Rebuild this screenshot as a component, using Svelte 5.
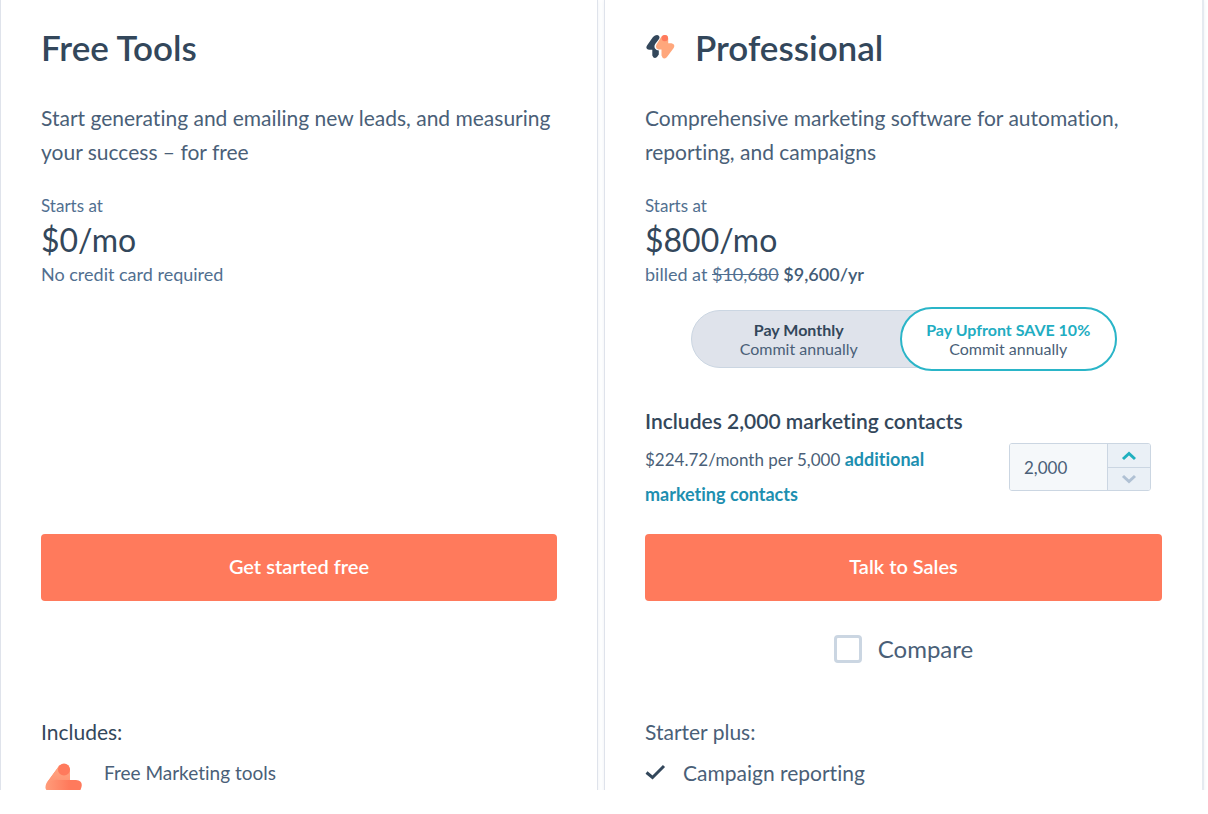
<script>
  let contacts = $state(2000);
  let billing = $state('upfront');
  let compare = $state(false);
  const shown = $derived(contacts.toLocaleString('en-US'));
</script>

<main>
  <section class="card">
    <h2>Free Tools</h2>
    <p class="summary">Start generating and emailing new leads, and measuring your success – for free</p>
    <div class="price">
      <p class="label">Starts at</p>
      <p class="amount">$0/mo</p>
      <p class="note">No credit card required</p>
    </div>
    <div class="options"></div>
    <button class="cta" type="button">Get started free</button>
    <div class="compare"></div>
    <div class="features">
      <h3>Includes:</h3>
      <ul>
        <li class="tool">
          <svg width="38" height="50" viewBox="0 0 38 50" aria-hidden="true">
            <defs>
              <linearGradient id="bolt" x1="0" y1="0" x2="1" y2="0">
                <stop offset="0" stop-color="#ff9c7a" />
                <stop offset="0.65" stop-color="#ff7a5c" />
              </linearGradient>
              <linearGradient id="fold" x1="0" y1="0" x2="0" y2="1">
                <stop offset="0" stop-color="#ffa883" />
                <stop offset="1" stop-color="#ff9474" />
              </linearGradient>
            </defs>
            <path d="M14 3 L1.500 20 Q-2 28 6 29 H13 V41 Q15 50 22 44 L35 28 Q40 18 31 17 H25 V7 Q23 -1 14 3Z" fill="url(#bolt)" />
            <path d="M14 3 L2 19.500 Q9 16 14 17 H25 V7 Q23 -1 14 3Z" fill="url(#fold)" />
            <circle cx="19" cy="6.500" r="6" fill="#ff7a5c" />
          </svg>
          <span>Free Marketing tools</span>
        </li>
      </ul>
    </div>
  </section>

  <section class="card">
    <h2>
      <svg width="30" height="26" viewBox="0 0 30 26" aria-hidden="true">
        <path d="M10 1.600 Q12.500 .3 14 2 Q15 3.400 14 5 L10.200 10 Q8.800 12.500 10 14.500 Q11.300 16.300 13.800 16.600 V20.500 L12 23 Q9 25.600 7.300 21.500 V15.800 H4 Q-.2 14.800 2.200 11.200 L8 3Z" fill="#33475b" />
        <path d="M16.500 2.500 L11.500 10.500 Q9.800 14.500 13.500 15.500 H16.500 V21.500 Q18 26.300 21.800 23.200 L28.700 14 Q30.700 10 26.500 9.200 H23.200 V4 Q22 -1 16.500 2.500Z" fill="#ffa77c" />
        <circle cx="19.800" cy="4.100" r="3.200" fill="#ff7a5c" />
      </svg>
      Professional
    </h2>
    <p class="summary">Comprehensive marketing software for automation, reporting, and campaigns</p>
    <div class="price">
      <p class="label">Starts at</p>
      <p class="amount">$800/mo</p>
      <p class="note">billed at <s>$10,680</s> <b>$9,600/yr</b></p>
    </div>
    <div class="options">
      <div class="toggle">
        <button type="button" class:active={billing === 'monthly'} onclick={() => (billing = 'monthly')}>
          <strong>Pay Monthly</strong>
          <span>Commit annually</span>
        </button>
        <button type="button" class:active={billing === 'upfront'} onclick={() => (billing = 'upfront')}>
          <strong>Pay Upfront SAVE 10%</strong>
          <span>Commit annually</span>
        </button>
      </div>
      <label class="included" for="contacts">Includes 2,000 marketing contacts</label>
      <div class="contacts">
        <p>$224.72/month per 5,000 <a href="#contacts">additional marketing contacts</a></p>
        <div class="stepper">
          <input id="contacts" type="text" readonly value={shown} />
          <div class="steps">
            <button type="button" aria-label="More contacts" onclick={() => (contacts += 5000)}>
              <svg width="16" height="10" viewBox="0 0 16 10"><path d="M2 8 L8 2.500 L14 8" /></svg>
            </button>
            <button type="button" aria-label="Fewer contacts" disabled={contacts <= 2000} onclick={() => (contacts -= 5000)}>
              <svg width="16" height="10" viewBox="0 0 16 10"><path d="M2 2 L8 7.500 L14 2" /></svg>
            </button>
          </div>
        </div>
      </div>
    </div>
    <button class="cta" type="button">Talk to Sales</button>
    <div class="compare">
      <label><input type="checkbox" bind:checked={compare} />Compare</label>
    </div>
    <div class="features">
      <h3 class="light">Starter plus:</h3>
      <ul>
        <li class="check">
          <svg width="21" height="16" viewBox="0 0 21 16" aria-hidden="true">
            <path d="M1.500 8.500 L7.500 13.500 L19 2" fill="none" stroke="#33475b" stroke-width="3" />
          </svg>
          <span>Campaign reporting</span>
        </li>
      </ul>
    </div>
  </section>
</main>

<style>
  :global(body) {
    margin: 0;
    background: #fff;
  }
  main {
    box-sizing: border-box;
    height: calc(100vh - 24px);
    overflow: hidden;
    display: grid;
    grid-template-columns: 1fr 1fr;
    grid-template-rows: repeat(7, auto);
    column-gap: 6px;
    padding-right: 6px;
    font-family: Lato, 'Liberation Sans', sans-serif;
    font-size: 21px;
    font-variant-ligatures: none;
    color: #4a5f78;
  }
  .card {
    display: grid;
    grid-row: 1 / -1;
    grid-template-rows: subgrid;
    min-width: 0;
    padding: 23px 40px 0;
    border: solid #dfe3eb;
    border-width: 0 1px;
    box-shadow: 0 0 4px #eef1f6;
  }
  .card:last-child {
    margin-right: -2px;
    border-right: 2px solid #e5eaf0;
  }
  h2,
  h3,
  p,
  ul {
    margin: 0;
    padding: 0;
    font-weight: 400;
  }
  button,
  input {
    font: inherit;
    color: inherit;
    margin: 0;
  }
  h2 {
    display: flex;
    align-items: center;
    gap: 20px;
    font-size: 35px;
    line-height: 48px;
    font-weight: 600;
    color: #33475b;
    margin-bottom: 30px;
  }
  .summary {
    line-height: 34px;
    margin-bottom: 25px;
  }
  .label,
  .note {
    font-size: 17px;
    line-height: 24px;
    color: #516f90;
  }
  .note {
    font-size: 18px;
  }
  .note b {
    font-weight: 600;
    color: #425b76;
  }
  .amount {
    font-size: 32px;
    line-height: 44px;
    color: #33475b;
  }
  .options {
    padding-top: 21px;
  }
  .toggle {
    display: flex;
    width: 426px;
    max-width: 100%;
    margin: 0 auto 33px;
    isolation: isolate;
    position: relative;
  }
  .toggle::before {
    content: '';
    position: absolute;
    inset: 3px 0;
    z-index: -1;
    border: 1px solid #cbd6e2;
    border-radius: 32px;
    background: #dfe3eb;
  }
  .toggle button {
    display: flex;
    flex: 1;
    flex-direction: column;
    align-items: center;
    justify-content: center;
    height: 64px;
    padding: 0;
    border: 2px solid transparent;
    border-radius: 32px;
    background: none;
    font-size: 16px;
    line-height: 19px;
    white-space: nowrap;
  }
  .toggle button + button {
    margin-left: -7px;
  }
  .toggle strong {
    font-weight: 700;
    color: #33475b;
  }
  .toggle .active {
    background: #fff;
    border-color: #2ab5c8;
  }
  .toggle .active strong {
    color: #1fadc2;
  }
  .included {
    display: block;
    line-height: 34px;
    font-weight: 600;
    color: #33475b;
    margin-bottom: 4px;
  }
  .contacts {
    display: flex;
    justify-content: space-between;
    align-items: flex-start;
    padding-right: 11px;
    margin-bottom: 22px;
  }
  .contacts p {
    width: 300px;
    font-size: 17px;
    line-height: 34px;
  }
  a {
    color: #1d8fb0;
    font-size: 18px;
    font-weight: 700;
    text-decoration: none;
  }
  .stepper {
    display: flex;
    box-sizing: border-box;
    width: 142px;
    height: 48px;
    margin-top: 1px;
    border: 1px solid #cbd6e2;
    border-radius: 3px;
    overflow: hidden;
  }
  .stepper input {
    flex: 1;
    min-width: 0;
    padding: 0 14px;
    border: 0;
    background: #f5f8fa;
    font-size: 17px;
  }
  .steps {
    display: grid;
    grid-template-rows: 1fr 1fr;
    width: 42px;
    border-left: 1px solid #cbd6e2;
  }
  .steps button {
    display: grid;
    place-items: center;
    padding: 0;
    border: 0;
    background: #eaf0f6;
    color: #1fb0bf;
  }
  .steps button + button {
    border-top: 1px solid #cbd6e2;
    color: #b0c1d4;
  }
  .steps path {
    fill: none;
    stroke: currentColor;
    stroke-width: 3;
  }
  .cta {
    height: 67px;
    padding: 0 0 3px;
    border: 0;
    border-radius: 4px;
    background: #ff7a5c;
    color: #fff;
    font-size: 20px;
    font-weight: 600;
  }
  .compare {
    display: flex;
    justify-content: center;
    padding: 32px 0 50px;
  }
  .compare label {
    display: flex;
    align-items: center;
    gap: 16px;
    font-size: 24px;
    line-height: 32px;
  }
  .compare input {
    appearance: none;
    box-sizing: border-box;
    width: 28px;
    height: 28px;
    border: 3px solid #cbd6e2;
    border-radius: 4px;
    background: #fff;
  }
  .compare input:checked {
    background: #33475b;
  }
  h3 {
    font-size: 21px;
    line-height: 34px;
    color: #33475b;
    margin-bottom: 7px;
  }
  h3.light {
    color: #4a5f78;
  }
  ul {
    list-style: none;
  }
  li {
    display: flex;
    line-height: 34px;
  }
  .tool {
    gap: 21px;
    padding-left: 4px;
    font-size: 19px;
  }
  .tool svg {
    margin-top: 7px;
  }
  .check {
    gap: 17px;
  }
  .check svg {
    margin-top: 8px;
  }
</style>
